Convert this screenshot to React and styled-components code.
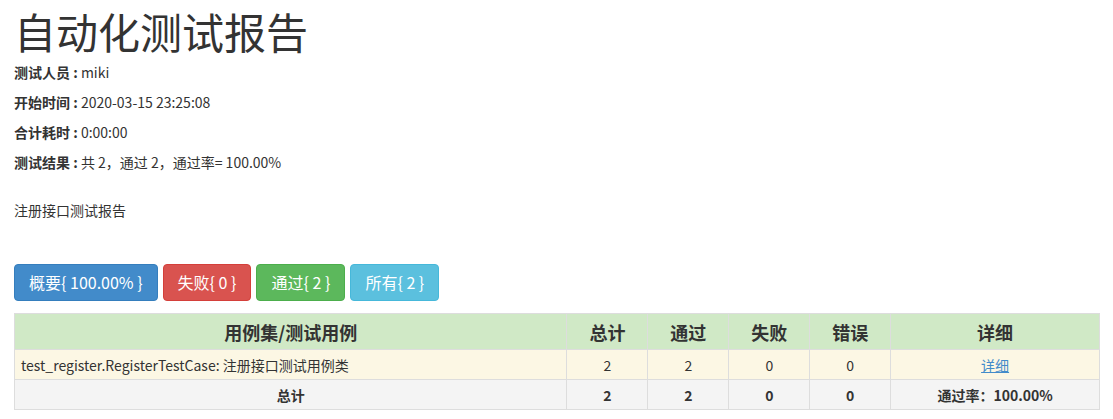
import React from "react";
import styled, { createGlobalStyle } from "styled-components";

const GlobalStyle = createGlobalStyle`
  body {
    margin: 0;
    background: #fff;
    color: #333;
    font-family: "Noto Sans CJK SC", "Liberation Sans", sans-serif;
    font-size: 14px;
    line-height: 20px;
  }
`;

const Page = styled.div`
  padding: 0 14px;
`;

const Title = styled.h1`
  margin: 5px 0 5px;
  font-size: 42px;
  font-weight: 400;
  line-height: 52px;
  color: #333;
`;

const Attr = styled.p`
  margin: 0 0 10px;
  strong {
    font-weight: 700;
  }
`;

const Description = styled.p`
  margin: 28px 0 0;
`;

const Filters = styled.div`
  display: flex;
  gap: 5px;
  margin-top: 44px;
`;

const palette = {
  primary: ["#428bca", "#357ebd"],
  danger: ["#d9534f", "#d43f3a"],
  success: ["#5cb85c", "#4cae4c"],
  info: ["#5bc0de", "#46b8da"],
};

const Btn = styled.button`
  font-family: inherit;
  font-size: 16px;
  line-height: 23px;
  padding: 6px 14px;
  color: #fff;
  background: ${(p) => palette[p.$kind][0]};
  border: 1px solid ${(p) => palette[p.$kind][1]};
  border-radius: 4px;
  cursor: pointer;
`;

const Table = styled.table`
  width: 1086px;
  margin-top: 12px;
  border-collapse: collapse;
  border: 1px solid #ddd;
`;

const HeadRow = styled.tr`
  background: #d0e9c6;
  th {
    height: 35px;
    font-size: 18px;
    font-weight: 700;
    text-align: center;
    border: 1px solid #ddd;
    padding: 0 6px;
  }
`;

const Row = styled.tr`
  background: ${(p) => (p.$total ? "#f4f4f4" : "#fcf7e4")};
  font-weight: ${(p) => (p.$total ? 700 : 400)};
  td {
    height: 29px;
    border: 1px solid #ddd;
    padding: 0 6px;
    text-align: center;
  }
`;

const NameCell = styled.td`
  && {
    text-align: left;
  }
`;

const DetailLink = styled.a`
  color: #428bca;
  text-decoration: underline;
`;

export default function App() {
  return (
    <>
      <GlobalStyle />
      <Page>
        <Title>自动化测试报告</Title>
        <Attr>
          <strong>测试人员 : </strong>miki
        </Attr>
        <Attr>
          <strong>开始时间 : </strong>2020-03-15 23:25:08
        </Attr>
        <Attr>
          <strong>合计耗时 : </strong>0:00:00
        </Attr>
        <Attr>
          <strong>测试结果 : </strong>共 2，通过 2，通过率= 100.00%
        </Attr>
        <Description>注册接口测试报告</Description>

        <Filters>
          <Btn $kind="primary">概要{"{ 100.00% }"}</Btn>
          <Btn $kind="danger">失败{"{ 0 }"}</Btn>
          <Btn $kind="success">通过{"{ 2 }"}</Btn>
          <Btn $kind="info">所有{"{ 2 }"}</Btn>
        </Filters>

        <Table>
          <colgroup>
            <col style={{ width: 553 }} />
            <col style={{ width: 81 }} />
            <col style={{ width: 81 }} />
            <col style={{ width: 81 }} />
            <col style={{ width: 81 }} />
            <col style={{ width: 209 }} />
          </colgroup>
          <thead>
            <HeadRow>
              <th>用例集/测试用例</th>
              <th>总计</th>
              <th>通过</th>
              <th>失败</th>
              <th>错误</th>
              <th>详细</th>
            </HeadRow>
          </thead>
          <tbody>
            <Row>
              <NameCell>test_register.RegisterTestCase: 注册接口测试用例类</NameCell>
              <td>2</td>
              <td>2</td>
              <td>0</td>
              <td>0</td>
              <td>
                <DetailLink href="#">详细</DetailLink>
              </td>
            </Row>
            <Row $total>
              <td>总计</td>
              <td>2</td>
              <td>2</td>
              <td>0</td>
              <td>0</td>
              <td>通过率：100.00%</td>
            </Row>
          </tbody>
        </Table>
      </Page>
    </>
  );
}
